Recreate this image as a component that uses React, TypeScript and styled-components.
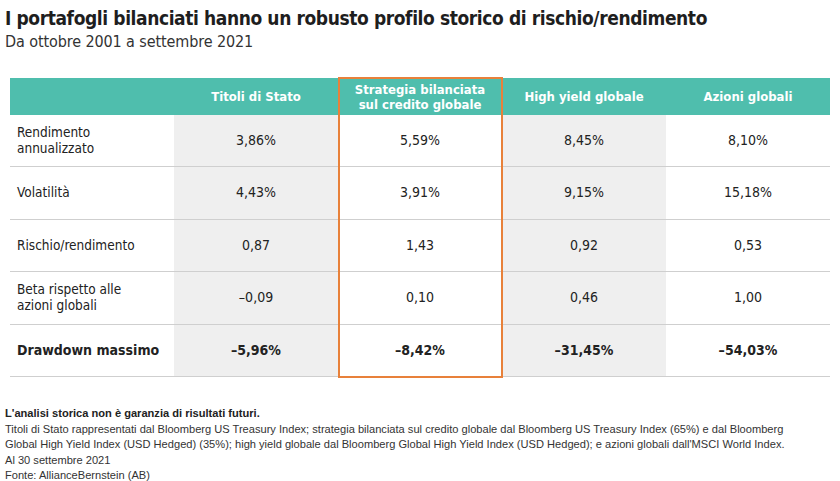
import React from 'react';
import styled, { createGlobalStyle } from 'styled-components';

const GlobalStyle = createGlobalStyle`
  html, body {
    margin: 0;
    padding: 0;
    background: #ffffff;
  }
  body {
    font-family: 'DejaVu Sans Condensed', 'DejaVu Sans', sans-serif;
    color: #1e1e1e;
  }
`;

const Page = styled.div`
  width: 840px;
  height: 481px;
  padding: 6px 0 0 5px;
  box-sizing: border-box;
  overflow: hidden;
`;

const Title = styled.h1`
  margin: 0;
  font-size: 19px;
  line-height: 24px;
  font-weight: 700;
  letter-spacing: -0.4px;
`;

const Subtitle = styled.h2`
  margin: 2px 0 0;
  font-size: 16px;
  line-height: 20px;
  font-weight: 400;
  color: #333;
  letter-spacing: -0.1px;
`;

const Table = styled.div`
  position: relative;
  margin: 26px 0 0 5px;
  width: 820px;
  display: grid;
  grid-template-columns: repeat(5, 164px);
`;

const HeadCell = styled.div`
  background: #4fbead;
  color: #fff;
  height: 37px;
  display: flex;
  align-items: center;
  justify-content: center;
  text-align: center;
  font-weight: 700;
  font-size: 13px;
  line-height: 15px;
`;

const Cell = styled.div<{ $shade?: boolean; $bold?: boolean; $label?: boolean }>`
  height: 52.4px;
  box-sizing: border-box;
  border-bottom: 1.5px solid #cfcfcf;
  background: ${p => (p.$shade ? '#efefef' : '#ffffff')};
  display: flex;
  align-items: center;
  justify-content: ${p => (p.$label ? 'flex-start' : 'center')};
  padding-left: ${p => (p.$label ? '7px' : '0')};
  font-size: ${p => (p.$label && !p.$bold ? '13.5px' : '14px')};
  line-height: 15.5px;
  font-weight: ${p => (p.$bold ? 700 : 400)};
  color: #222;
`;

const Highlight = styled.div`
  position: absolute;
  left: 328px;
  top: -1px;
  width: 165px;
  bottom: -1px;
  border: 2px solid #e8813a;
  box-sizing: border-box;
  pointer-events: none;
`;

const Notes = styled.div`
  margin-top: 29px;
  font-family: 'Liberation Sans Narrow', 'Liberation Sans', Arial, sans-serif;
  font-size: 11.1px;
  line-height: 15.6px;
  color: #333;
`;

const NoteStrong = styled.div`
  font-weight: 700;
  color: #222;
`;

const headers = ['', 'Titoli di Stato', 'Strategia bilanciata\nsul credito globale', 'High yield globale', 'Azioni globali'];

const rows: { label: string; values: string[]; bold?: boolean }[] = [
  { label: 'Rendimento\nannualizzato', values: ['3,86%', '5,59%', '8,45%', '8,10%'] },
  { label: 'Volatilità', values: ['4,43%', '3,91%', '9,15%', '15,18%'] },
  { label: 'Rischio/rendimento', values: ['0,87', '1,43', '0,92', '0,53'] },
  { label: 'Beta rispetto alle\nazioni globali', values: ['–0,09', '0,10', '0,46', '1,00'] },
  { label: 'Drawdown massimo', values: ['–5,96%', '–8,42%', '–31,45%', '–54,03%'], bold: true },
];

const lines = (t: string) =>
  t.split('\n').map((s, i, a) => (
    <React.Fragment key={i}>
      {s}
      {i < a.length - 1 && <br />}
    </React.Fragment>
  ));

const App: React.FC = () => (
  <>
    <GlobalStyle />
    <Page>
      <Title>I portafogli bilanciati hanno un robusto profilo storico di rischio/rendimento</Title>
      <Subtitle>Da ottobre 2001 a settembre 2021</Subtitle>
      <Table>
        {headers.map((h, i) => (
          <HeadCell key={i}>{lines(h)}</HeadCell>
        ))}
        {rows.map((r, ri) => (
          <React.Fragment key={ri}>
            <Cell $label $bold={r.bold}>
              <span>{lines(r.label)}</span>
            </Cell>
            {r.values.map((v, vi) => (
              <Cell key={vi} $shade={vi === 0 || vi === 2} $bold={r.bold}>
                {v}
              </Cell>
            ))}
          </React.Fragment>
        ))}
        <Highlight />
      </Table>
      <Notes>
        <NoteStrong>L'analisi storica non è garanzia di risultati futuri.</NoteStrong>
        <div>
          Titoli di Stato rappresentati dal Bloomberg US Treasury Index; strategia bilanciata sul credito globale dal
          Bloomberg US Treasury Index (65%) e dal Bloomberg
          <br />
          Global High Yield Index (USD Hedged) (35%); high yield globale dal Bloomberg Global High Yield Index (USD
          Hedged); e azioni globali dall'MSCI World Index.
        </div>
        <div>Al 30 settembre 2021</div>
        <div>Fonte: AllianceBernstein (AB)</div>
      </Notes>
    </Page>
  </>
);

export default App;
